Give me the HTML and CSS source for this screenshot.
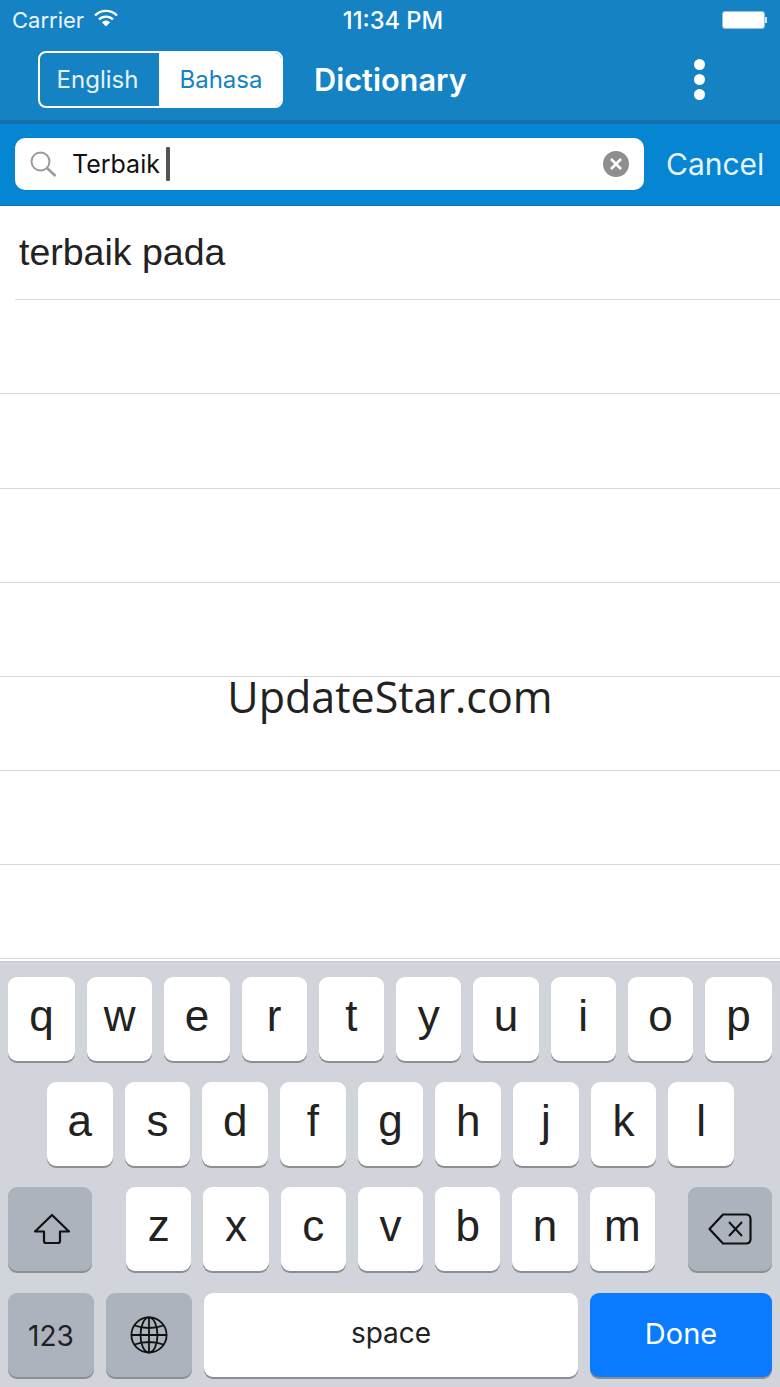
FILE: index.html
```html
<!DOCTYPE html>
<html lang="en">
<head>
    <meta charset="UTF-8">
    <meta name="viewport" content="width=device-width, initial-scale=1.0">
    <title>Dictionary</title>
    <link rel="stylesheet" href="styles.css">
</head>
<body>
    <div class="phone">
        <header class="top">
            <div class="status">
                <div class="status-left">
                    <span>Carrier</span>
                    <svg class="wifi" width="24" height="18" viewBox="0 0 24 18">
                        <path d="M1 6.5 A15.5 15.5 0 0 1 23 6.5" fill="none" stroke="#fff" stroke-width="2.4"/>
                        <path d="M5 10.5 A10 10 0 0 1 19 10.5" fill="none" stroke="#fff" stroke-width="2.4"/>
                        <path d="M12 17.5 L7.8 13.2 A6 6 0 0 1 16.2 13.2 Z" fill="#fff"/>
                    </svg>
                </div>
                <div class="status-time">11:34 PM</div>
                <div class="status-right">
                    <div class="battery"></div>
                    <div class="battery-tip"></div>
                </div>
            </div>
            <nav class="nav">
                <div class="segment">
                    <div class="seg seg-off">English</div>
                    <div class="seg seg-on">Bahasa</div>
                </div>
                <div class="title">Dictionary</div>
                <div class="dots"><i></i><i></i><i></i></div>
            </nav>
        </header>

        <div class="searchbar">
            <div class="field">
                <svg class="search-icon" width="28" height="26" viewBox="0 0 28 26">
                    <circle cx="11.5" cy="10.5" r="9" fill="none" stroke="#9a9a9a" stroke-width="2"/>
                    <path d="M18 17 L26.5 25" stroke="#9a9a9a" stroke-width="2.6"/>
                </svg>
                <span class="query">Terbaik</span>
                <span class="cursor"></span>
                <div class="clear">
                    <svg width="14" height="14" viewBox="0 0 14 14">
                        <path d="M2 2 L12 12 M12 2 L2 12" stroke="#fff" stroke-width="2.6"/>
                    </svg>
                </div>
            </div>
            <div class="cancel">Cancel</div>
        </div>

        <ul class="results">
            <li class="row row-first">terbaik pada</li>
            <li class="row"></li>
            <li class="row row-tall"></li>
            <li class="row"></li>
            <li class="row"></li>
            <li class="row"></li>
            <li class="row"></li>
            <li class="row"></li>
        </ul>
        <div class="watermark">UpdateStar.com</div>

        <div class="keyboard">
            <div class="keys keys-top">
                <div class="key">q</div><div class="key">w</div><div class="key">e</div><div class="key">r</div><div class="key">t</div>
                <div class="key">y</div><div class="key">u</div><div class="key">i</div><div class="key">o</div><div class="key">p</div>
            </div>
            <div class="keys keys-mid">
                <div class="key">a</div><div class="key">s</div><div class="key">d</div><div class="key">f</div><div class="key">g</div>
                <div class="key">h</div><div class="key">j</div><div class="key">k</div><div class="key">l</div>
            </div>
            <div class="keys keys-third">
                <div class="key key-fn key-wide key-shift">
                    <svg width="38" height="32" viewBox="0 0 38 32">
                        <path d="M19 2 L36 18.5 H27 V28 Q27 30 25 30 H13 Q11 30 11 28 V18.5 H2 Z" fill="none" stroke="#111" stroke-width="2.2" stroke-linejoin="round"/>
                    </svg>
                </div>
                <div class="letters">
                    <div class="key">z</div><div class="key">x</div><div class="key">c</div><div class="key">v</div>
                    <div class="key">b</div><div class="key">n</div><div class="key">m</div>
                </div>
                <div class="key key-fn key-wide">
                    <svg width="44" height="32" viewBox="0 0 44 32">
                        <path d="M15 1.5 H38 Q42.5 1.5 42.5 6 V26 Q42.5 30.5 38 30.5 H15 L1.5 16 Z" fill="none" stroke="#111" stroke-width="2.2" stroke-linejoin="round"/>
                        <path d="M21 9 L34 23 M34 9 L21 23" stroke="#111" stroke-width="2"/>
                    </svg>
                </div>
            </div>
            <div class="keys keys-bottom">
                <div class="key key-fn key-num">123</div>
                <div class="key key-fn key-globe">
                    <svg width="38" height="38" viewBox="0 0 38 38" fill="none" stroke="#111" stroke-width="1.8">
                        <circle cx="19" cy="19" r="17.6"/>
                        <ellipse cx="19" cy="19" rx="8.5" ry="17.6"/>
                        <path d="M19 1.4 V36.6 M1.4 19 H36.6 M4.5 9.5 Q19 14.5 33.5 9.5 M4.5 28.5 Q19 23.5 33.5 28.5"/>
                    </svg>
                </div>
                <div class="key key-space">space</div>
                <div class="key key-done">Done</div>
            </div>
        </div>
    </div>
</body>
</html>
```

FILE: styles.css
```css
* {
    box-sizing: border-box;
}
html, body {
    margin: 0;
    padding: 0;
}
body {
    background-color: #fff;
    font-family: Inter, "Liberation Sans", sans-serif;
}
.phone {
    position: relative;
    width: 780px;
    height: 1387px;
    overflow: hidden;
    display: flex;
    flex-direction: column;
}

/* header */
.top {
    height: 124px;
    background-color: #1482c3;
    border-bottom: 4px solid #0f72ae;
    color: #fff;
}
.status {
    height: 40px;
    padding: 0 12px;
    display: flex;
    align-items: center;
    justify-content: space-between;
    font-size: 22px;
    color: #eaf4fa;
}
.status-left {
    width: 156px;
    display: flex;
    align-items: center;
    gap: 10px;
}
.wifi {
    margin-top: -4px;
}
.status-time {
    font-size: 23.7px;
    font-weight: 500;
    color: #fff;
}
.status-right {
    width: 150px;
    padding-right: 1px;
    display: flex;
    align-items: center;
    justify-content: flex-end;
}
.battery {
    width: 43px;
    height: 18px;
    background-color: #fff;
    border: 1px solid #8fc1e0;
    border-radius: 3px;
}
.battery-tip {
    width: 2px;
    height: 6px;
    background-color: #cfe4f2;
}
.nav {
    height: 80px;
    padding: 11px 0 0 38px;
    display: flex;
    align-items: flex-start;
}
.segment {
    width: 245px;
    height: 57px;
    display: flex;
    border: 2px solid #fff;
    border-radius: 8px;
    font-size: 24px;
    overflow: hidden;
}
.seg {
    flex: 1;
    display: flex;
    align-items: center;
    justify-content: center;
}
.seg-off {
    flex: 0 0 119px;
    padding-right: 4px;
    color: #e6f2f9;
}
.seg-on {
    padding-left: 2px;
    background-color: #fff;
    color: #1482c3;
}
.title {
    margin-left: 31px;
    height: 57px;
    line-height: 57px;
    font-size: 30.7px;
    font-weight: 600;
}
.dots {
    margin-left: auto;
    margin-right: 75px;
    padding-top: 8px;
    display: flex;
    flex-direction: column;
    gap: 4px;
}
.dots i {
    display: block;
    width: 11px;
    height: 11px;
    border-radius: 50%;
    background-color: #fff;
}

/* search */
.searchbar {
    height: 82px;
    padding: 14px 15px 15px;
    background-color: #0685d2;
    border-bottom: 1px solid #0f72ae;
    display: flex;
    align-items: flex-start;
}
.field {
    width: 629px;
    height: 52px;
    padding: 0 15px 0 14px;
    background-color: #fff;
    border-radius: 10px;
    display: flex;
    align-items: center;
}
.search-icon {
    flex: none;
}
.query {
    margin-left: 15px;
    font-size: 25px;
    color: #111;
}
.cursor {
    width: 4px;
    height: 34px;
    margin-left: 6px;
    background-color: #555;
    border-radius: 1px;
}
.clear {
    width: 26px;
    height: 26px;
    margin-left: auto;
    border-radius: 50%;
    background-color: #8e8e8e;
    display: flex;
    align-items: center;
    justify-content: center;
}
.cancel {
    margin-left: 22px;
    height: 52px;
    line-height: 52px;
    font-size: 30px;
    color: #e6f3fb;
}

/* results */
.results {
    list-style: none;
    margin: 0;
    padding: 0;
    flex: 1;
}
.row {
    height: 94px;
    border-bottom: 1px solid #d9d9d9;
    font-family: "Liberation Sans", sans-serif;
    font-size: 37.5px;
    color: #222;
}
.row-first {
    margin-left: 15px;
    padding: 26px 0 0 4px;
    line-height: 41px;
}
.row-tall {
    height: 95px;
}
.watermark {
    position: absolute;
    left: 0;
    right: 0;
    top: 668px;
    text-align: center;
    font-family: "Open Sans", sans-serif;
    font-size: 43px;
    line-height: 58px;
    color: #222;
}

/* keyboard */
.keyboard {
    height: 426px;
    padding: 15px 8px 0;
    background-color: #d1d5db;
    border-top: 1px solid #c4c7cc;
    display: flex;
    flex-direction: column;
    gap: 21px;
}
.keys {
    height: 84px;
    display: flex;
    gap: 12px;
}
.key {
    flex: 1;
    height: 84px;
    background-color: #fff;
    border-radius: 9px;
    box-shadow: 0 2px 0 #8b8e93;
    display: flex;
    align-items: center;
    justify-content: center;
    padding-bottom: 6px;
    font-family: "Liberation Sans", sans-serif;
    font-size: 44px;
    color: #222;
}
.keys-top .key:first-child,
.keys-top .key:last-child {
    flex: 0 0 67px;
}
.keys-mid {
    padding: 0 38px 0 39px;
}
.keys-third {
    justify-content: space-between;
    gap: 0;
}
.keys-bottom {
    margin-top: 1px;
}
.letters {
    width: 529px;
    margin-left: 1px;
    display: flex;
    gap: 12px;
}
.key-fn {
    background-color: #adb3bc;
    padding-bottom: 0;
}
.key-wide {
    flex: 0 0 84px;
}
.key-shift {
    padding-left: 3px;
}
.key-num {
    flex: 0 0 86px;
    font-family: Inter, sans-serif;
    font-size: 28px;
    padding-top: 2px;
}
.key-globe {
    flex: 0 0 86px;
}
.key-space {
    flex: 0 0 374px;
    font-family: Inter, sans-serif;
    font-size: 28px;
    padding-bottom: 4px;
}
.key-done {
    flex: 0 0 182px;
    background-color: #0a7bff;
    color: #fff;
    font-family: Inter, sans-serif;
    font-size: 29px;
    padding-bottom: 4px;
}
```
